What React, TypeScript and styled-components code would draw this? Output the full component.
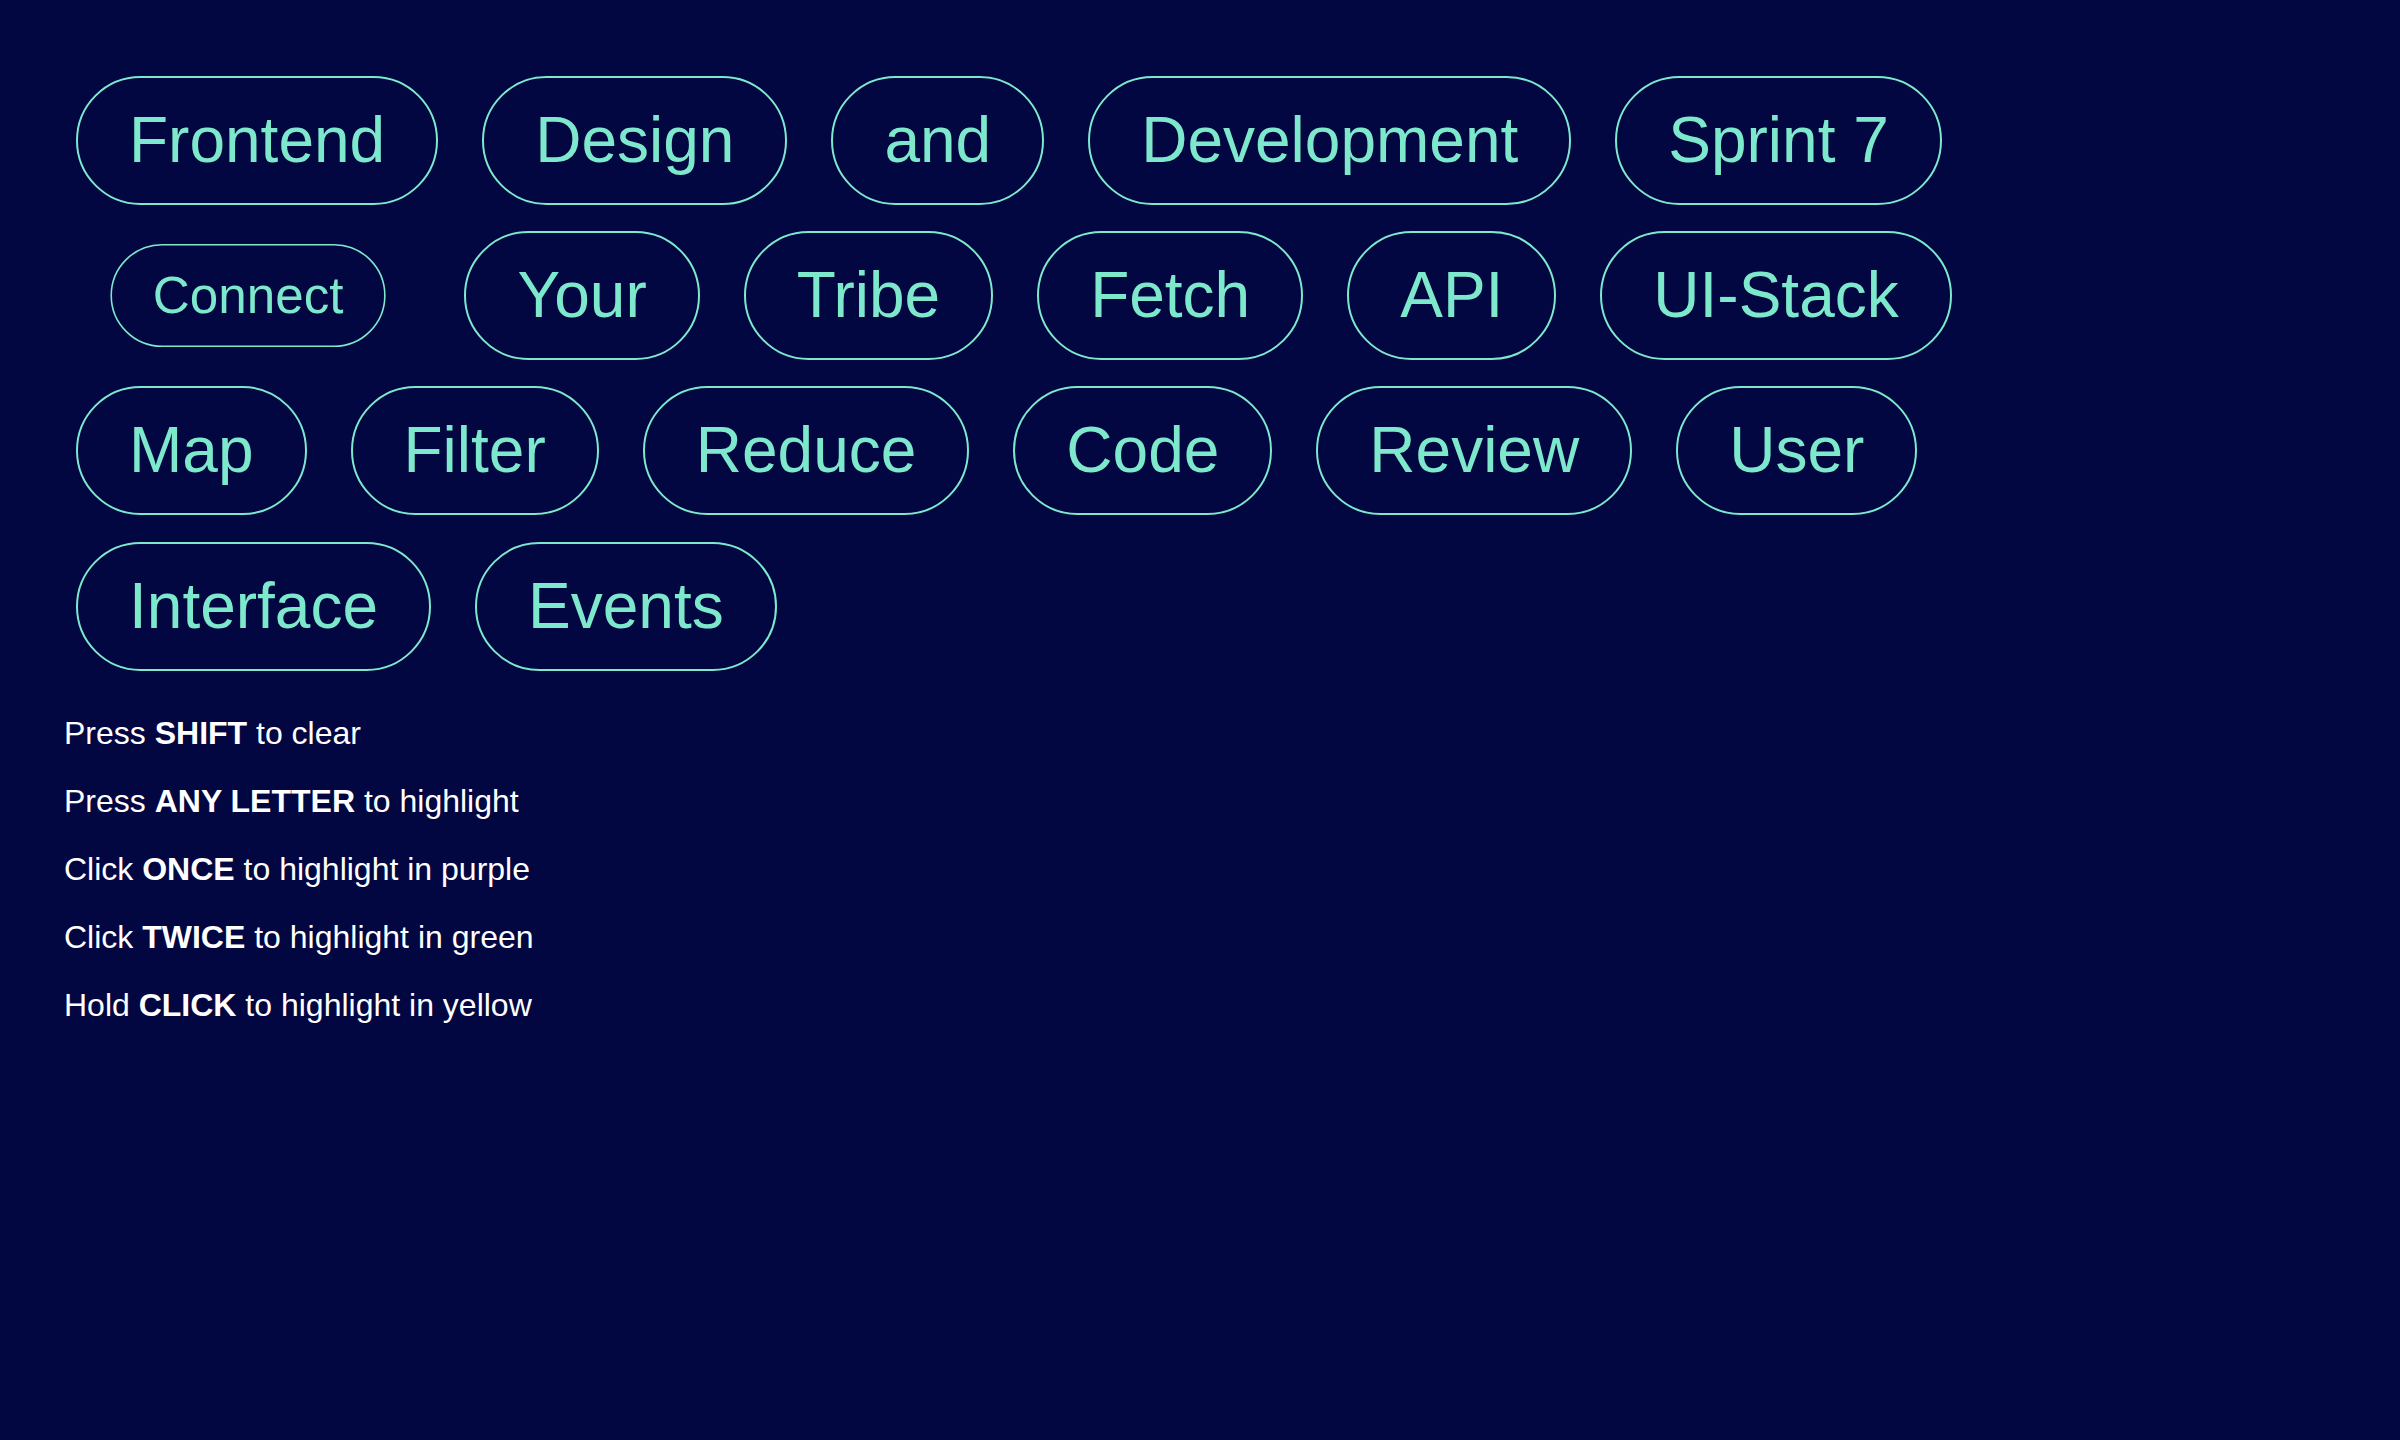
import React from "react";
import styled, { createGlobalStyle } from "styled-components";

const GlobalStyle = createGlobalStyle`
  html, body {
    margin: 0;
    padding: 0;
    background: #020641;
  }
  body {
    font-family: "Liberation Sans", Arial, sans-serif;
    min-height: 1440px;
  }
`;

const Page = styled.main`
  min-height: 1440px;
  box-sizing: border-box;
  padding: 76px 0 0 64px;
  background: #020641;
  font-family: "Liberation Sans", Arial, sans-serif;
`;

const PillList = styled.div`
  display: flex;
  flex-wrap: wrap;
  align-items: center;
  column-gap: 44px;
  row-gap: 26.2px;
  margin-left: 12px;
  width: 2060px;
`;

const Pill = styled.span<{ $scale?: number }>`
  display: inline-block;
  box-sizing: border-box;
  padding: 26px 51px;
  border: 2px solid #7de8cb;
  border-radius: 999px;
  color: #7de8cb;
  font-size: 64px;
  line-height: 73px;
  white-space: nowrap;
  transform: ${(p) => (p.$scale ? `scale(${p.$scale})` : "none")};
  transform-origin: center center;
  cursor: pointer;
  user-select: none;
`;

const Instructions = styled.div`
  display: flex;
  flex-direction: column;
  gap: 32px;
  margin-top: 44.5px;
`;

const Line = styled.p`
  margin: 0;
  color: #ffffff;
  font-size: 32px;
  line-height: 36px;
`;

const Key = styled.strong`
  font-weight: 700;
`;

const words: { text: string; scale?: number }[] = [
  { text: "Frontend" },
  { text: "Design" },
  { text: "and" },
  { text: "Development" },
  { text: "Sprint 7" },
  { text: "Connect", scale: 0.8 },
  { text: "Your" },
  { text: "Tribe" },
  { text: "Fetch" },
  { text: "API" },
  { text: "UI-Stack" },
  { text: "Map" },
  { text: "Filter" },
  { text: "Reduce" },
  { text: "Code" },
  { text: "Review" },
  { text: "User" },
  { text: "Interface" },
  { text: "Events" },
];

const lines: [string, string, string][] = [
  ["Press", "SHIFT", "to clear"],
  ["Press", "ANY LETTER", "to highlight"],
  ["Click", "ONCE", "to highlight in purple"],
  ["Click", "TWICE", "to highlight in green"],
  ["Hold", "CLICK", "to highlight in yellow"],
];

export default function App() {
  return (
    <>
      <GlobalStyle />
      <Page>
        <PillList>
          {words.map((w) => (
            <Pill key={w.text} $scale={w.scale}>
              {w.text}
            </Pill>
          ))}
        </PillList>
        <Instructions>
          {lines.map(([a, b, c]) => (
            <Line key={a + b}>
              {a} <Key>{b}</Key> {c}
            </Line>
          ))}
        </Instructions>
      </Page>
    </>
  );
}
